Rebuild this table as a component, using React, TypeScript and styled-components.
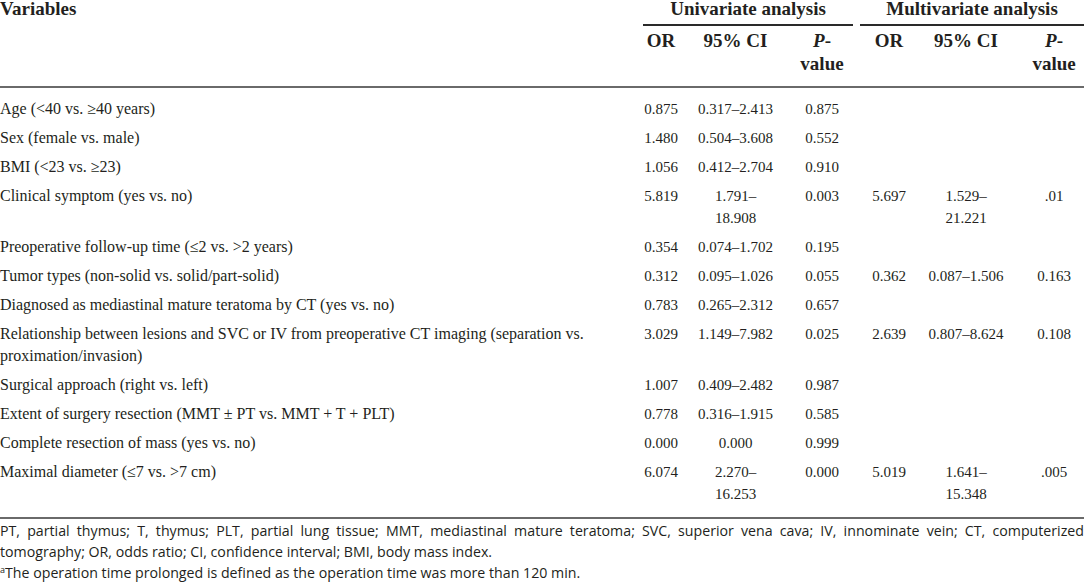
import React from "react";
import styled, { createGlobalStyle } from "styled-components";

const Global = createGlobalStyle`
  html, body { margin: 0; padding: 0; background: #ffffff; }
  body {
    font-family: "Liberation Serif", "Times New Roman", serif;
    color: #231f20;
  }
`;

const Page = styled.div`
  width: 1084px;
`;

const Table = styled.table`
  width: 1084px;
  table-layout: fixed;
  border-collapse: collapse;
  border-spacing: 0;
  font-size: 15px;
  line-height: 22px;
`;

const VarHead = styled.th`
  text-align: left;
  vertical-align: top;
  font-size: 19px;
  font-weight: 700;
  line-height: 18px;
  padding: 0;
  border-bottom: 2px solid #6a6a6a;
`;

const GroupHead = styled.th<{ $pl: number; $pr: number }>`
  vertical-align: top;
  padding: 0 ${(p) => p.$pr}px 0 ${(p) => p.$pl}px;
`;

const GroupTitle = styled.div`
  font-size: 19px;
  font-weight: 700;
  line-height: 18px;
  text-align: center;
  padding-bottom: 6px;
  border-bottom: 2px solid #2a2a2a;
`;

const SubHead = styled.th<{ $pl: number; $pr: number }>`
  vertical-align: top;
  text-align: center;
  font-size: 19px;
  font-weight: 700;
  line-height: 23px;
  padding: 2.5px ${(p) => p.$pr}px 11.5px ${(p) => p.$pl}px;
  border-bottom: 2px solid #6a6a6a;
`;

const Body = styled.tbody`
  tr:first-child td { padding-top: 9.5px; }
  tr:last-child td { padding-bottom: 12.5px; border-bottom: 2px solid #6a6a6a; }
`;

const Label = styled.td`
  text-align: left;
  vertical-align: top;
  font-size: 16px;
  padding: 3.5px 0;
`;

const Num = styled.td<{ $pl: number; $pr: number }>`
  text-align: center;
  vertical-align: top;
  padding: 3.5px ${(p) => p.$pr}px 3.5px ${(p) => p.$pl}px;
`;

const Notes = styled.div`
  padding-top: 1px;
  font-family: "Open Sans", "Liberation Sans", sans-serif;
  font-size: 14.2px;
  line-height: 21px;
  color: #231f20;
`;

const Note = styled.p<{ $full?: boolean }>`
  margin: 0;
  text-align: justify;
  text-align-last: ${(p) => (p.$full ? "justify" : "left")};
  white-space: ${(p) => (p.$full ? "nowrap" : "normal")};
`;

const Sup = styled.sup`
  font-size: 9px;
  line-height: 0;
  vertical-align: 5px;
`;

type Col = { w: number; pl: number; pr: number };

const cols: Col[] = [
  { w: 637, pl: 0, pr: 0 },
  { w: 48, pl: 6, pr: 6 },
  { w: 101, pl: 11, pr: 11 },
  { w: 72, pl: 11, pr: 11 },
  { w: 62, pl: 6, pr: 6 },
  { w: 92, pl: 6.5, pr: 6.5 },
  { w: 72, pl: 16, pr: 4 },
];

type Row = { label: string; v: string[] };

const rows: Row[] = [
  { label: "Age (<40 vs. \u226540 years)", v: ["0.875", "0.317\u20132.413", "0.875", "", "", ""] },
  { label: "Sex (female vs. male)", v: ["1.480", "0.504\u20133.608", "0.552", "", "", ""] },
  { label: "BMI (<23 vs. \u226523)", v: ["1.056", "0.412\u20132.704", "0.910", "", "", ""] },
  { label: "Clinical symptom (yes vs. no)", v: ["5.819", "1.791\u201318.908", "0.003", "5.697", "1.529\u201321.221", ".01"] },
  { label: "Preoperative follow-up time (\u22642 vs. >2 years)", v: ["0.354", "0.074\u20131.702", "0.195", "", "", ""] },
  { label: "Tumor types (non-solid vs. solid/part-solid)", v: ["0.312", "0.095\u20131.026", "0.055", "0.362", "0.087\u20131.506", "0.163"] },
  { label: "Diagnosed as mediastinal mature teratoma by CT (yes vs. no)", v: ["0.783", "0.265\u20132.312", "0.657", "", "", ""] },
  {
    label:
      "Relationship between lesions and SVC or IV from preoperative CT imaging (separation vs. proximation/invasion)",
    v: ["3.029", "1.149\u20137.982", "0.025", "2.639", "0.807\u20138.624", "0.108"],
  },
  { label: "Surgical approach (right vs. left)", v: ["1.007", "0.409\u20132.482", "0.987", "", "", ""] },
  { label: "Extent of surgery resection (MMT \u00b1 PT vs. MMT + T + PLT)", v: ["0.778", "0.316\u20131.915", "0.585", "", "", ""] },
  { label: "Complete resection of mass (yes vs. no)", v: ["0.000", "0.000", "0.999", "", "", ""] },
  { label: "Maximal diameter (\u22647 vs. >7 cm)", v: ["6.074", "2.270\u201316.253", "0.000", "5.019", "1.641\u201315.348", ".005"] },
];

const subHeads = ["OR", "95% CI", "P", "OR", "95% CI", "P"];

export default function App() {
  return (
    <Page>
      <Global />
      <Table>
        <colgroup>
          {cols.map((c, i) => (
            <col key={i} style={{ width: c.w }} />
          ))}
        </colgroup>
        <thead>
          <tr>
            <VarHead rowSpan={2}>Variables</VarHead>
            <GroupHead colSpan={3} $pl={6} $pr={5}>
              <GroupTitle>Univariate analysis</GroupTitle>
            </GroupHead>
            <GroupHead colSpan={3} $pl={2} $pr={0}>
              <GroupTitle>Multivariate analysis</GroupTitle>
            </GroupHead>
          </tr>
          <tr>
            {subHeads.map((h, i) => {
              const c = cols[i + 1];
              return (
                <SubHead key={i} $pl={c.pl} $pr={c.pr}>
                  {h === "P" ? (
                    <>
                      <i>P</i>-value
                    </>
                  ) : (
                    h
                  )}
                </SubHead>
              );
            })}
          </tr>
        </thead>
        <Body>
          {rows.map((r, ri) => (
            <tr key={ri}>
              <Label>{r.label}</Label>
              {r.v.map((val, vi) => {
                const c = cols[vi + 1];
                return (
                  <Num key={vi} $pl={c.pl} $pr={c.pr}>
                    {val}
                  </Num>
                );
              })}
            </tr>
          ))}
        </Body>
      </Table>
      <Notes>
        <Note $full>
          PT, partial thymus; T, thymus; PLT, partial lung tissue; MMT, mediastinal mature teratoma; SVC, superior vena
          cava; IV, innominate vein; CT, computerized
        </Note>
        <Note>tomography; OR, odds ratio; CI, confidence interval; BMI, body mass index.</Note>
        <Note>
          <Sup>a</Sup>The operation time prolonged is defined as the operation time was more than 120 min.
        </Note>
      </Notes>
    </Page>
  );
}
